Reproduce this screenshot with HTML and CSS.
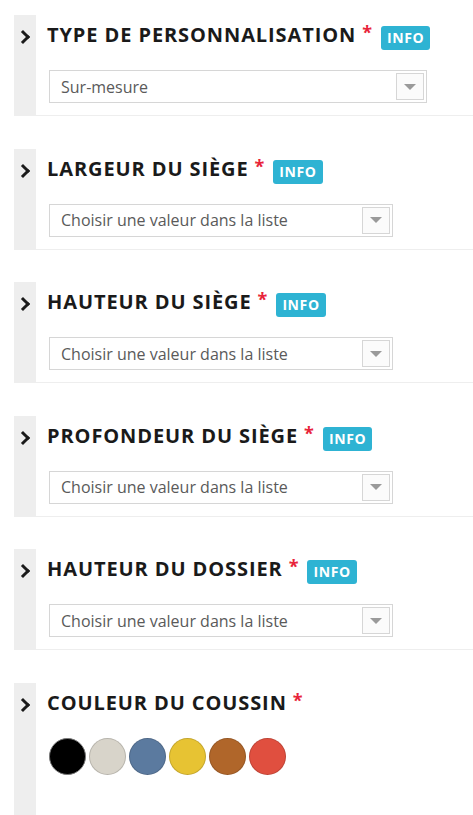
FILE: index.html
```html
<!DOCTYPE html>
<html lang="fr">
<head>
  <meta charset="UTF-8">
  <title>Personnalisation</title>
  <link rel="stylesheet" href="styles.css">
</head>
<body>

  <div class="options">
    <!-- Type de personnalisation -->
    <div class="option">
      <div class="strip"><span class="chevron"></span></div>
      <div class="content">
        <div class="title">
          <h3>TYPE DE PERSONNALISATION</h3><span class="req">*</span><span class="info">INFO</span>
        </div>
        <div class="select wide">
          <span class="value">Sur-mesure</span>
          <span class="arrow"></span>
        </div>
      </div>
    </div>

    <div class="option">
      <div class="strip"><span class="chevron"></span></div>
      <div class="content">
        <div class="title">
          <h3>LARGEUR DU SIÈGE</h3><span class="req">*</span><span class="info">INFO</span>
        </div>
        <div class="select">
          <span class="value">Choisir une valeur dans la liste</span>
          <span class="arrow"></span>
        </div>
      </div>
    </div>

    <div class="option">
      <div class="strip"><span class="chevron"></span></div>
      <div class="content">
        <div class="title">
          <h3>HAUTEUR DU SIÈGE</h3><span class="req">*</span><span class="info">INFO</span>
        </div>
        <div class="select">
          <span class="value">Choisir une valeur dans la liste</span>
          <span class="arrow"></span>
        </div>
      </div>
    </div>

    <div class="option">
      <div class="strip"><span class="chevron"></span></div>
      <div class="content">
        <div class="title">
          <h3>PROFONDEUR DU SIÈGE</h3><span class="req">*</span><span class="info">INFO</span>
        </div>
        <div class="select">
          <span class="value">Choisir une valeur dans la liste</span>
          <span class="arrow"></span>
        </div>
      </div>
    </div>

    <div class="option">
      <div class="strip"><span class="chevron"></span></div>
      <div class="content">
        <div class="title">
          <h3>HAUTEUR DU DOSSIER</h3><span class="req">*</span><span class="info">INFO</span>
        </div>
        <div class="select">
          <span class="value">Choisir une valeur dans la liste</span>
          <span class="arrow"></span>
        </div>
      </div>
    </div>

    <!-- Couleur -->
    <div class="option last">
      <div class="strip"><span class="chevron"></span></div>
      <div class="content">
        <div class="title">
          <h3>COULEUR DU COUSSIN</h3><span class="req">*</span>
        </div>
        <div class="colors">
          <span class="color black"></span>
          <span class="color beige"></span>
          <span class="color blue"></span>
          <span class="color yellow"></span>
          <span class="color brown"></span>
          <span class="color red"></span>
        </div>
      </div>
    </div>
  </div>

</body>
</html>
```

FILE: styles.css
```css
body {
  font-family: "Open Sans", Arial, sans-serif;
  background: #fff;
  margin: 0;
  padding: 0;
}
.options {
  padding: 15px 0 0 14px;
}
.option {
  display: flex;
  margin-bottom: 32.6px;
}
.strip {
  width: 22px;
  flex-shrink: 0;
  background: #eeeeee;
  display: flex;
  justify-content: center;
  padding-top: 17px;
  box-sizing: border-box;
}
.chevron {
  width: 7px;
  height: 7px;
  border-right: 3px solid #1a1a1a;
  border-top: 3px solid #1a1a1a;
  transform: rotate(45deg);
  margin-left: -5px;
}
.content {
  flex: 1;
  padding: 11px 0 12px 13px;
  border-bottom: 1px solid #eeeeee;
}
.title {
  display: flex;
  align-items: flex-start;
  height: 24px;
  margin-left: -2px;
}
h3 {
  margin: -1px 0 0 0;
  font-size: 20px;
  font-weight: 700;
  line-height: 20px;
  letter-spacing: 0.9px;
  color: #1a1a1a;
}
.req {
  color: #e8243a;
  font-size: 18px;
  font-weight: 700;
  line-height: 12px;
  margin-left: 6px;
}
.info {
  background: #2eb3d3;
  color: #fff;
  font-size: 14px;
  font-weight: 700;
  letter-spacing: 0.6px;
  line-height: 24px;
  height: 24px;
  padding: 0 6px;
  border-radius: 3px;
  margin-left: 9px;
}
.select {
  margin-top: 20px;
  width: 344px;
  height: 33px;
  box-sizing: border-box;
  border: 1px solid #d6d6d6;
  display: flex;
  align-items: center;
  justify-content: space-between;
  padding: 0 2px 0 11px;
}
.select.wide {
  width: 378px;
}
.value {
  font-size: 16px;
  color: #5a5a5a;
}
.arrow {
  width: 28px;
  height: 27px;
  box-sizing: border-box;
  border: 1px solid #d6d6d6;
  background: #fbfbfb;
  display: flex;
  align-items: center;
  justify-content: center;
}
.arrow::after {
  content: "";
  border-left: 6px solid transparent;
  border-right: 6px solid transparent;
  border-top: 6px solid #9a9a9a;
}
.option.last {
  margin-bottom: 0;
}
.option.last .content {
  border-bottom: none;
  height: 132px;
}
.colors {
  display: flex;
  gap: 3px;
  margin-top: 20px;
}
.color {
  width: 37px;
  height: 37px;
  border-radius: 50%;
  box-sizing: border-box;
  border: 1px solid rgba(0, 0, 0, 0.15);
}
.black { background: #000; border-color: #777; }
.beige { background: #d8d4ca; }
.blue { background: #5b7a9f; }
.yellow { background: #e7c333; }
.brown { background: #b0662a; }
.red { background: #e04f3f; }
```
